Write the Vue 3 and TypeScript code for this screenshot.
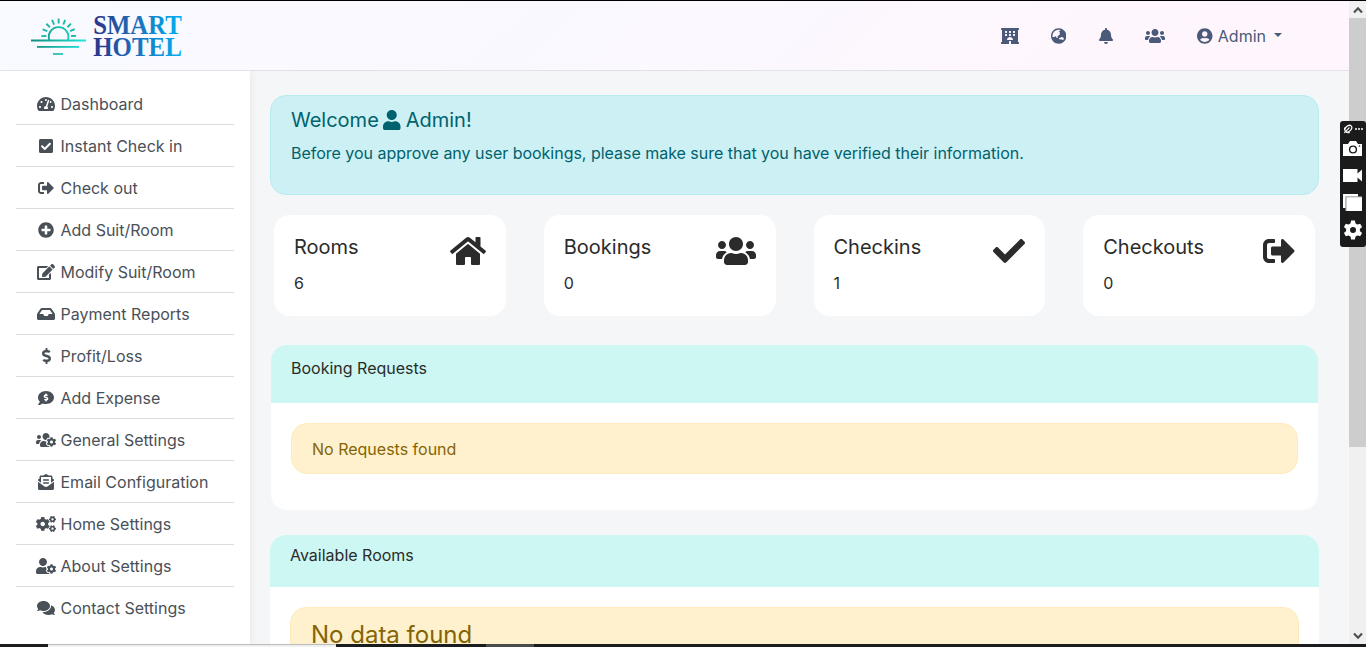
<script setup lang="ts">
interface Icon {
  w: number
  d: string
}

const cogBody =
  'c2.6-14.1 2.6-28.5 0-42.6l25.8-14.9c3-1.7 4.3-5.2 3.3-8.5-6.7-21.6-18.2-41.2-33.2-57.4-2.3-2.5-6-3.1-9-1.4l-25.8 14.9c-10.9-9.3-23.4-16.5-36.9-21.3v-29.8c0-3.4-2.4-6.4-5.7-7.1-22.3-5-45-4.8-66.2 0-3.3.7-5.7 3.7-5.7 7.1v29.8c-13.5 4.8-26 12-36.9 21.3l-25.8-14.9c-2.9-1.7-6.7-1.1-9 1.4-15 16.2-26.5 35.8-33.2 57.4-1 3.3.4 6.8 3.3 8.5l25.8 14.9c-2.6 14.1-2.6 28.5 0 42.6l-25.8 14.9c-3 1.7-4.3 5.2-3.3 8.5 6.7 21.6 18.2 41.1 33.2 57.4 2.3 2.5 6 3.1 9 1.4l25.8-14.9c10.9 9.3 23.4 16.5 36.9 21.3v29.8c0 3.4 2.4 6.4 5.7 7.1 22.3 5 45 4.8 66.2 0 3.3-.7 5.7-3.7 5.7-7.1v-29.8c13.5-4.8 26-12 36.9-21.3l25.8 14.9c2.9 1.7 6.7 1.1 9-1.4 15-16.2 26.5-35.8 33.2-57.4 1-3.3-.4-6.8-3.3-8.5l-25.8-14.9z'
const cogHole =
  'c-26.8 0-48.5-21.8-48.5-48.5s21.8-48.5 48.5-48.5 48.5 21.8 48.5 48.5-21.7 48.5-48.5 48.5z'

const smallCog = (y: number): string =>
  `M512.1 ${191 + y}l-8.2 14.3c-3 5.3-9.4 7.5-15.1 5.4-11.8-4.4-22.6-10.7-32.1-18.6-4.6-3.8-5.8-10.5-2.8-15.7l8.2-14.3c-6.9-8-12.3-17.3-15.9-27.4h-16.5c-6 0-11.2-4.3-12.2-10.3-2-12-2.1-24.6 0-37.1 1-6 6.2-10.4 12.2-10.4h16.5c3.6-10.1 9-19.4 15.9-27.4l-8.2-14.3c-3-5.2-1.9-11.9 2.8-15.7 9.5-7.9 20.4-14.2 32.1-18.6 5.7-2.1 12.1.1 15.1 5.4l8.2 14.3c10.5-1.9 21.2-1.9 31.7 0L552 ${6.3 + y}c3-5.3 9.4-7.5 15.1-5.4 11.8 4.4 22.6 10.7 32.1 18.6 4.6 3.8 5.8 10.5 2.8 15.7l-8.2 14.3c6.9 8 12.3 17.3 15.9 27.4h16.5c6 0 11.2 4.3 12.2 10.3 2 12 2.1 24.6 0 37.1-1 6-6.2 10.4-12.2 10.4h-16.5c-3.6 10.1-9 19.4-15.9 27.4l8.2 14.3c3 5.2 1.9 11.9-2.8 15.7-9.5 7.9-20.4 14.2-32.1 18.6-5.7 2.1-12.1-.1-15.1-5.4l-8.2-14.3c-10.4 1.9-21.2 1.9-31.7 0zm-10.5-58.8c38.5 29.6 82.4-14.3 52.8-52.8-38.5-29.7-82.4 14.3-52.8 52.8z`

const icons: Record<string, Icon> = {
  gauge: { w: 576, d: 'M288 32C128.94 32 0 160.94 0 320c0 52.8 14.25 102.26 39.06 144.8 5.61 9.62 16.3 15.2 27.44 15.2h443c11.14 0 21.83-5.58 27.44-15.2C561.75 422.26 576 372.8 576 320c0-159.06-128.94-288-288-288zm0 64c14.71 0 26.58 10.13 30.32 23.65-1.11 2.26-2.64 4.23-3.45 6.67l-9.22 27.67c-5.13 3.49-10.97 6.01-17.64 6.01-17.67 0-32-14.33-32-32S270.33 96 288 96zM96 384c-17.67 0-32-14.33-32-32s14.33-32 32-32 32 14.33 32 32-14.33 32-32 32zm48-160c-17.67 0-32-14.33-32-32s14.33-32 32-32 32 14.33 32 32-14.33 32-32 32zm246.77-72.41l-61.33 184C343.13 347.33 352 364.54 352 384c0 11.72-3.38 22.55-8.88 32H232.88c-5.5-9.45-8.88-20.28-8.88-32 0-33.94 26.5-61.43 59.9-63.59l61.34-184.01c4.17-12.56 17.73-19.45 30.36-15.17 12.57 4.19 19.35 17.79 15.17 30.36zm14.66 57.2l15.52-46.55c3.47-1.29 7.13-2.23 11.05-2.23 17.67 0 32 14.33 32 32s-14.33 32-32 32c-11.38-.01-20.89-6.28-26.57-15.22zM480 384c-17.67 0-32-14.33-32-32s14.33-32 32-32 32 14.33 32 32-14.33 32-32 32z' },
  checkSquare: { w: 448, d: 'M400 480H48c-26.51 0-48-21.49-48-48V80c0-26.51 21.49-48 48-48h352c26.51 0 48 21.49 48 48v352c0 26.51-21.49 48-48 48zm-204.686-98.059l184-184c6.248-6.248 6.248-16.379 0-22.627l-22.627-22.627c-6.248-6.248-16.379-6.249-22.628 0L184 302.745l-70.059-70.059c-6.248-6.248-16.379-6.248-22.628 0l-22.627 22.627c-6.248 6.248-6.248 16.379 0 22.627l104 104c6.249 6.25 16.379 6.25 22.628.001z' },
  signOut: { w: 512, d: 'M497 273L329 441c-15 15-41 4.5-41-17v-96H152c-13.3 0-24-10.7-24-24v-96c0-13.3 10.7-24 24-24h136V88c0-21.4 25.9-32 41-17l168 168c9.3 9.4 9.3 24.6 0 34zM192 436v-40c0-6.6-5.4-12-12-12H96c-17.7 0-32-14.3-32-32V160c0-17.7 14.3-32 32-32h84c6.6 0 12-5.4 12-12V76c0-6.6-5.4-12-12-12H96c-53 0-96 43-96 96v192c0 53 43 96 96 96h84c6.6 0 12-5.4 12-12z' },
  plus: { w: 512, d: 'M256 8C119 8 8 119 8 256s111 248 248 248 248-111 248-248S393 8 256 8zm144 276c0 6.6-5.4 12-12 12h-92v92c0 6.6-5.4 12-12 12h-56c-6.6 0-12-5.4-12-12v-92h-92c-6.6 0-12-5.4-12-12v-56c0-6.6 5.4-12 12-12h92v-92c0-6.6 5.4-12 12-12h56c6.6 0 12 5.4 12 12v92h92c6.6 0 12 5.4 12 12v56z' },
  edit: { w: 576, d: 'M402.6 83.2l90.2 90.2c3.8 3.8 3.8 10 0 13.8L274.4 405.6l-92.8 10.3c-12.4 1.4-22.9-9.1-21.5-21.5l10.3-92.8L388.8 83.2c3.8-3.8 10-3.8 13.8 0zm162-22.9l-48.8-48.8c-15.2-15.2-39.9-15.2-55.2 0l-35.4 35.4c-3.8 3.8-3.8 10 0 13.8l90.2 90.2c3.8 3.8 10 3.8 13.8 0l35.4-35.4c15.2-15.3 15.2-40 0-55.2zM384 346.2V448H64V128h229.8c3.2 0 6.2-1.3 8.5-3.5l40-40c7.6-7.6 2.2-20.5-8.5-20.5H48C21.5 64 0 85.5 0 112v352c0 26.5 21.5 48 48 48h352c26.5 0 48-21.5 48-48V306.2c0-10.7-12.9-16-20.5-8.5l-40 40c-2.2 2.3-3.5 5.3-3.5 8.5z' },
  inbox: { w: 576, d: 'M567.938 243.908L462.25 85.374A48.003 48.003 0 0 0 422.311 64H153.689a48 48 0 0 0-39.938 21.374L8.062 243.908A47.994 47.994 0 0 0 0 270.533V400c0 26.51 21.49 48 48 48h480c26.51 0 48-21.49 48-48V270.533a47.994 47.994 0 0 0-8.062-26.625zM162.252 128h251.497l85.333 128H376l-32 64H232l-32-64H76.918l85.334-128z' },
  dollar: { w: 288, d: 'M209.2 233.4l-108-31.6C88.7 198.2 80 186.5 80 173.5c0-16.3 13.2-29.5 29.5-29.5h66.3c12.2 0 24.2 3.7 34.2 10.5 6.1 4.1 14.3 3.1 19.5-2l34.8-34c7.1-6.9 6.1-18.4-1.8-24.5C238 74.8 207.4 64.1 176 64V16c0-8.8-7.2-16-16-16h-32c-8.8 0-16 7.2-16 16v48h-2.5C45.8 64-5.4 118.7.5 183.6c4.2 46.1 39.4 83.6 83.8 96.6l102.5 30c12.5 3.7 21.2 15.3 21.2 28.3 0 16.3-13.2 29.5-29.5 29.5h-66.3C100 368 88 364.3 78 357.5c-6.1-4.1-14.3-3.1-19.5 2l-34.8 34c-7.1 6.9-6.1 18.4 1.8 24.5 24.5 19.2 55.1 29.9 86.5 30v48c0 8.8 7.2 16 16 16h32c8.8 0 16-7.2 16-16v-48.2c46.6-.9 90.3-28.6 105.7-72.7 21.5-61.6-14.6-124.8-72.5-141.7z' },
  commentDollar: { w: 512, d: 'M256 32C114.62 32 0 125.12 0 240c0 49.56 21.41 95.01 57.02 130.74C44.46 421.05 2.7 465.97 2.2 466.5A7.995 7.995 0 0 0 8 480c66.26 0 115.99-31.75 140.6-51.38C181.29 440.93 217.59 448 256 448c141.38 0 256-93.12 256-208S397.38 32 256 32zm24 302.44V352c0 8.84-7.16 16-16 16h-16c-8.84 0-16-7.16-16-16v-17.73c-11.42-1.35-22.28-5.19-31.78-11.46-6.22-4.11-6.82-13.11-1.55-18.38l17.52-17.52c3.74-3.74 9.31-4.24 14.11-2.03 3.18 1.46 6.66 2.22 10.26 2.22h32.78c4.66 0 8.44-3.78 8.44-8.42 0-3.75-2.52-7.08-6.12-8.11l-50.07-14.3c-22.25-6.35-40.01-24.71-42.91-47.67-4.05-32.07 19.03-59.43 49.32-63.05V128c0-8.84 7.16-16 16-16h16c8.84 0 16 7.16 16 16v17.73c11.42 1.35 22.28 5.19 31.78 11.46 6.22 4.11 6.82 13.11 1.55 18.38l-17.52 17.52c-3.74 3.74-9.31 4.24-14.11 2.03a24.516 24.516 0 0 0-10.26-2.22h-32.78c-4.66 0-8.44 3.78-8.44 8.42 0 3.75 2.52 7.08 6.12 8.11l50.07 14.3c22.25 6.36 40.01 24.71 42.91 47.67 4.05 32.06-19.03 59.42-49.32 63.04z' },
  usersCog: { w: 640, d: `M610.5 341.3${cogBody}M496 368.5${cogHole}M96 224c35.3 0 64-28.7 64-64s-28.7-64-64-64-64 28.7-64 64 28.7 64 64 64zm224 32c1.9 0 3.7-.5 5.6-.6 8.3-21.7 20.5-42.1 36.3-59.2 7.4-8 17.9-12.6 28.9-12.6 6.9 0 13.7 1.8 19.6 5.3l7.9 4.6c.8-.5 1.6-.9 2.4-1.4 7-14.6 11.2-30.8 11.2-48 0-61.9-50.1-112-112-112S208 82.1 208 144c0 61.9 50.1 112 112 112zm105.2 194.5c-2.3-1.2-4.6-2.6-6.8-3.9-8.2 4.8-15.3 9.8-27.5 9.8-10.9 0-21.4-4.6-28.9-12.6-18.3-19.8-32.3-43.9-40.2-69.6-10.7-34.5 24.9-49.7 25.8-50.3-.1-2.6-.1-5.2 0-7.8l-7.9-4.6c-3.8-2.2-7-5-9.8-8.1-3.3.2-6.5.6-9.8.6-24.6 0-47.6-6-68.5-16h-8.3C179.6 288 128 339.6 128 403.2V432c0 26.5 21.5 48 48 48h255.4c-3.7-6-6.2-12.8-6.2-20.3v-9.2zM173.1 274.6C161.5 263.1 145.6 256 128 256H64c-35.3 0-64 28.7-64 64v32c0 17.7 14.3 32 32 32h65.9c6.3-47.4 34.9-87.3 75.2-109.4z` },
  mailText: { w: 512, d: 'M176 216h160c8.84 0 16-7.16 16-16v-16c0-8.84-7.16-16-16-16H176c-8.84 0-16 7.16-16 16v16c0 8.84 7.16 16 16 16zm-16 80c0 8.84 7.16 16 16 16h160c8.84 0 16-7.16 16-16v-16c0-8.84-7.16-16-16-16H176c-8.84 0-16 7.16-16 16v16zm96 121.13c-16.42 0-32.84-5.06-46.86-15.19L0 250.86V464c0 26.51 21.49 48 48 48h416c26.51 0 48-21.49 48-48V250.86L302.86 401.94c-14.02 10.12-30.44 15.19-46.86 15.19zm237.61-254.18c-8.85-6.94-17.24-13.47-29.61-22.81V96c0-26.51-21.49-48-48-48h-77.55c-3.04-2.2-5.87-4.26-9.04-6.56C312.6 29.17 279.2-.35 256 0c-23.2-.35-56.59 29.17-73.41 41.44-3.17 2.3-6 4.36-9.04 6.56H96c-26.51 0-48 21.49-48 48v44.14c-12.37 9.33-20.76 15.87-29.61 22.81A47.995 47.995 0 0 0 0 200.72v10.65l96 69.35V96h320v184.72l96-69.35v-10.65c0-14.74-6.78-28.67-18.39-37.77z' },
  cogs: { w: 640, d: `${smallCog(0)}M386.3 286.1l33.7 16.8c10.1 5.8 14.5 18.1 10.5 29.1-8.9 24.2-26.4 46.4-42.6 65.8-7.4 8.9-20.2 11.1-30.3 5.3l-29.1-16.8c-16 13.7-34.6 24.6-54.9 31.7v33.6c0 11.6-8.3 21.6-19.7 23.6-24.6 4.2-50.4 4.4-75.9 0-11.5-2-20-11.9-20-23.6V418c-20.3-7.2-38.9-18-54.9-31.7L74 403c-10 5.8-22.9 3.6-30.3-5.3-16.2-19.4-33.3-41.6-42.2-65.7-4-10.9.4-23.2 10.5-29.1l33.3-16.8c-3.9-20.9-3.9-42.4 0-63.4L12 205.8c-10.1-5.8-14.6-18.1-10.5-29 8.9-24.2 26-46.4 42.2-65.8 7.4-8.9 20.2-11.1 30.3-5.3l29.1 16.8c16-13.7 34.6-24.6 54.9-31.7V57.1c0-11.5 8.2-21.5 19.6-23.5 24.6-4.2 50.5-4.4 76-.1 11.5 2 20 11.9 20 23.6v33.6c20.3 7.2 38.9 18 54.9 31.7l29.1-16.8c10-5.8 22.9-3.6 30.3 5.3 16.2 19.4 33.2 41.6 42.1 65.8 4 10.9.1 23.2-10 29.1l-33.7 16.8c3.9 21 3.9 42.5 0 63.5zm-117.6 21.1c59.2-77-28.7-164.9-105.7-105.7-59.2 77 28.7 164.9 105.7 105.7z${smallCog(299)}` },
  userCog: { w: 640, d: `M610.5 373.3${cogBody}M496 400.5${cogHole}M224 256c70.7 0 128-57.3 128-128S294.7 0 224 0 96 57.3 96 128s57.3 128 128 128zm201.2 226.5c-2.3-1.2-4.6-2.6-6.8-3.9l-7.9 4.6c-6 3.4-12.8 5.3-19.6 5.3-10.9 0-21.4-4.6-28.9-12.6-18.3-19.8-32.3-43.9-40.2-69.6-5.5-17.7 1.9-36.4 17.9-45.7l7.9-4.6c-.1-2.6-.1-5.2 0-7.8l-7.9-4.6c-16-9.2-23.4-28-17.9-45.7.9-2.9 2.2-5.8 3.2-8.7-3.8-.3-7.5-1.2-11.4-1.2h-16.7c-22.2 10.2-46.9 16-72.9 16s-50.6-5.8-72.9-16h-16.7C60.2 288 0 348.2 0 422.4V464c0 26.5 21.5 48 48 48h352c10.1 0 19.5-3.2 27.2-8.5-1.2-3.8-2-7.7-2-11.8v-9.2z` },
  comments: { w: 576, d: 'M416 192c0-88.4-93.1-160-208-160S0 103.6 0 192c0 34.3 14.1 65.9 38 92-13.4 30.2-35.5 54.2-35.8 54.5-2.2 2.3-2.8 5.7-1.5 8.7S4.8 352 8 352c36.6 0 66.9-12.3 88.7-25 32.2 15.7 70.3 25 111.3 25 114.9 0 208-71.6 208-160zm122 220c23.9-26 38-57.7 38-92 0-66.9-53.5-124.2-129.3-148.1.9 6.6 1.3 13.3 1.3 20.1 0 105.9-107.7 192-240 192-10.8 0-21.3-.8-31.7-1.9C207.8 439.6 281.8 480 368 480c41 0 79.1-9.2 111.3-25 21.8 12.7 52.1 25 88.7 25 3.2 0 6.1-1.9 7.3-4.8 1.3-2.9.7-6.3-1.5-8.7-.3-.3-22.4-24.2-35.8-54.5z' },
  hotel: { w: 576, d: 'M560 64c8.84 0 16-7.16 16-16V16c0-8.84-7.16-16-16-16H16C7.16 0 0 7.16 0 16v32c0 8.84 7.16 16 16 16h15.98v384H16c-8.84 0-16 7.16-16 16v32c0 8.84 7.16 16 16 16h240v-80c0-8.8 7.2-16 16-16h32c8.8 0 16 7.2 16 16v80h240c8.84 0 16-7.16 16-16v-32c0-8.84-7.16-16-16-16h-16V64h16zm-304 44.8c0-6.4 6.4-12.8 12.8-12.8h38.4c6.4 0 12.8 6.4 12.8 12.8v38.4c0 6.4-6.4 12.8-12.8 12.8h-38.4c-6.4 0-12.8-6.4-12.8-12.8v-38.4zm0 96c0-6.4 6.4-12.8 12.8-12.8h38.4c6.4 0 12.8 6.4 12.8 12.8v38.4c0 6.4-6.4 12.8-12.8 12.8h-38.4c-6.4 0-12.8-6.4-12.8-12.8v-38.4zm-128-96c0-6.4 6.4-12.8 12.8-12.8h38.4c6.4 0 12.8 6.4 12.8 12.8v38.4c0 6.4-6.4 12.8-12.8 12.8h-38.4c-6.4 0-12.8-6.4-12.8-12.8v-38.4zM179.2 256h-38.4c-6.4 0-12.8-6.4-12.8-12.8v-38.4c0-6.4 6.4-12.8 12.8-12.8h38.4c6.4 0 12.8 6.4 12.8 12.8v38.4c0 6.4-6.4 12.8-12.8 12.8zM192 384c0-53.02 42.98-96 96-96s96 42.98 96 96H192zm256-140.8c0 6.4-6.4 12.8-12.8 12.8h-38.4c-6.4 0-12.8-6.4-12.8-12.8v-38.4c0-6.4 6.4-12.8 12.8-12.8h38.4c6.4 0 12.8 6.4 12.8 12.8v38.4zm0-96c0 6.4-6.4 12.8-12.8 12.8h-38.4c-6.4 0-12.8-6.4-12.8-12.8v-38.4c0-6.4 6.4-12.8 12.8-12.8h38.4c6.4 0 12.8 6.4 12.8 12.8v38.4z' },
  globe: { w: 496, d: 'M248 8C111.03 8 0 119.03 0 256s111.03 248 248 248 248-111.03 248-248S384.97 8 248 8zm-11.34 240.23c-2.89 4.82-8.1 7.77-13.72 7.77h-.31c-4.24 0-8.31 1.69-11.31 4.69l-5.66 5.66c-3.12 3.12-3.12 8.19 0 11.31l5.66 5.66c3 3 4.69 7.07 4.69 11.31V304c0 8.84-7.16 16-16 16h-6.11c-6.06 0-11.6-3.42-14.31-8.85l-22.62-45.23c-2.44-4.88-8.95-5.94-12.81-2.08l-19.47 19.46c-3 3-7.07 4.69-11.31 4.69H50.81C49.12 277.55 48 266.92 48 256c0-110.28 89.72-200 200-200 21.51 0 42.2 3.51 61.63 9.82l-50.16 38.53c-5.11 3.41-4.63 11.06.86 13.81l10.83 5.41c5.42 2.71 8.84 8.25 8.84 14.31V216c0 4.42-3.58 8-8 8h-3.06c-3.03 0-5.8-1.71-7.15-4.42-1.56-3.12-5.96-3.29-7.76-.3l-17.37 28.95zM408 358.43c0 4.24-1.69 8.31-4.69 11.31l-9.57 9.57c-3 3-7.07 4.69-11.31 4.69h-15.16c-4.24 0-8.31-1.69-11.31-4.69l-13.01-13.01a26.767 26.767 0 0 0-25.42-7.04l-21.27 5.32c-1.27.32-2.57.48-3.88.48h-10.34c-4.24 0-8.31-1.69-11.31-4.69l-11.91-11.91a8.008 8.008 0 0 1-2.34-5.66v-10.2c0-3.27 1.99-6.21 5.03-7.43l39.34-15.74c1.98-.79 3.86-1.82 5.59-3.05l23.71-16.89a7.978 7.978 0 0 1 4.64-1.48h12.09c3.23 0 6.15 1.94 7.39 4.93l5.35 12.85a4 4 0 0 0 3.69 2.46h3.8c1.78 0 3.35-1.18 3.84-2.88l4.2-14.47c.5-1.71 2.06-2.88 3.84-2.88h6.06c2.21 0 4 1.79 4 4v12.93c0 2.12.84 4.16 2.34 5.66l11.91 11.91c3 3 4.69 7.07 4.69 11.31v24.6z' },
  bell: { w: 448, d: 'M224 512c35.32 0 63.97-28.65 63.97-64H160.03c0 35.35 28.65 64 63.97 64zm215.39-149.71c-19.32-20.76-55.47-51.99-55.47-154.29 0-77.7-54.48-139.9-127.94-155.16V32c0-17.67-14.32-32-31.98-32s-31.98 14.33-31.98 32v20.84C118.56 68.1 64.08 130.3 64.08 208c0 102.3-36.15 133.53-55.47 154.29-6 6.45-8.66 14.16-8.61 21.71.11 16.4 12.98 32 32.1 32h383.8c19.12 0 32-15.6 32.1-32 .05-7.55-2.61-15.27-8.61-21.71z' },
  users: { w: 640, d: 'M96 224c35.3 0 64-28.7 64-64s-28.7-64-64-64-64 28.7-64 64 28.7 64 64 64zm448 0c35.3 0 64-28.7 64-64s-28.7-64-64-64-64 28.7-64 64 28.7 64 64 64zm32 32h-64c-17.6 0-33.5 7.1-45.1 18.6 40.3 22.1 68.9 62 75.1 109.4h66c17.7 0 32-14.3 32-32v-32c0-35.3-28.7-64-64-64zm-256 0c61.9 0 112-50.1 112-112S381.9 32 320 32 208 82.1 208 144s50.1 112 112 112zm76.8 32h-8.3c-20.8 10-43.9 16-68.5 16s-47.6-6-68.5-16h-8.3C179.6 288 128 339.6 128 403.2V432c0 26.5 21.5 48 48 48h288c26.5 0 48-21.5 48-48v-28.8c0-63.6-51.6-115.2-115.2-115.2zm-223.7-13.4C161.5 263.1 145.6 256 128 256H64c-35.3 0-64 28.7-64 64v32c0 17.7 14.3 32 32 32h65.9c6.3-47.4 34.9-87.3 75.2-109.4z' },
  userCircle: { w: 496, d: 'M248 8C111 8 0 119 0 256s111 248 248 248 248-111 248-248S385 8 248 8zm0 96c48.6 0 88 39.4 88 88s-39.4 88-88 88-88-39.4-88-88 39.4-88 88-88zm0 344c-58.7 0-111.3-26.6-146.5-68.2 18.8-35.4 55.6-59.8 98.5-59.8 2.4 0 4.8.4 7.1 1.1 13 4.2 26.6 6.9 40.9 6.9 14.3 0 28-2.7 40.9-6.9 2.3-.7 4.7-1.1 7.1-1.1 42.9 0 79.7 24.4 98.5 59.8C359.3 421.4 306.7 448 248 448z' },
  user: { w: 448, d: 'M224 256c70.7 0 128-57.3 128-128S294.7 0 224 0 96 57.3 96 128s57.3 128 128 128zm89.6 32h-16.7c-22.2 10.2-46.9 16-72.9 16s-50.6-5.8-72.9-16h-16.7C60.2 288 0 348.2 0 422.4V464c0 26.5 21.5 48 48 48h352c26.5 0 48-21.5 48-48v-41.6c0-74.2-60.2-134.4-134.4-134.4z' },
  home: { w: 576, d: 'M280.37 148.26L96 300.11V464a16 16 0 0 0 16 16l112.06-.29a16 16 0 0 0 15.92-16V368a16 16 0 0 1 16-16h64a16 16 0 0 1 16 16v95.64a16 16 0 0 0 16 16.05L464 480a16 16 0 0 0 16-16V300L295.67 148.26a12.19 12.19 0 0 0-15.3 0zM571.6 251.47L488 182.56V44.05a12 12 0 0 0-12-12h-56a12 12 0 0 0-12 12v72.61L318.47 43a48 48 0 0 0-61 0L4.34 251.47a12 12 0 0 0-1.6 16.9l25.5 31A12 12 0 0 0 45.15 301l235.22-193.74a12.19 12.19 0 0 1 15.3 0L530.9 301a12 12 0 0 0 16.9-1.6l25.5-31a12 12 0 0 0-1.7-16.93z' },
  check: { w: 512, d: 'M173.898 439.404l-166.4-166.4c-9.997-9.997-9.997-26.206 0-36.204l36.203-36.204c9.997-9.998 26.207-9.998 36.204 0L192 312.69 432.095 72.596c9.997-9.997 26.207-9.997 36.204 0l36.203 36.204c9.997 9.997 9.997 26.206 0 36.204l-294.4 294.401c-9.998 9.997-26.207 9.997-36.204-.001z' },
}

const menu: { icon: string; label: string }[] = [
  { icon: 'gauge', label: 'Dashboard' },
  { icon: 'checkSquare', label: 'Instant Check in' },
  { icon: 'signOut', label: 'Check out' },
  { icon: 'plus', label: 'Add Suit/Room' },
  { icon: 'edit', label: 'Modify Suit/Room' },
  { icon: 'inbox', label: 'Payment Reports' },
  { icon: 'dollar', label: 'Profit/Loss' },
  { icon: 'commentDollar', label: 'Add Expense' },
  { icon: 'usersCog', label: 'General Settings' },
  { icon: 'mailText', label: 'Email Configuration' },
  { icon: 'cogs', label: 'Home Settings' },
  { icon: 'userCog', label: 'About Settings' },
  { icon: 'comments', label: 'Contact Settings' },
]

const navIcons = ['hotel', 'globe', 'bell', 'users']

const stats: { title: string; value: number; icon: string }[] = [
  { title: 'Rooms', value: 6, icon: 'home' },
  { title: 'Bookings', value: 0, icon: 'users' },
  { title: 'Checkins', value: 1, icon: 'check' },
  { title: 'Checkouts', value: 0, icon: 'signOut' },
]

const rays = [-90, -67, -45, -22, 0, 22, 45, 67, 90]
const box = (name: string): string => `0 0 ${icons[name].w} 512`
</script>

<template>
  <div class="screen">
    <div class="page">
      <header class="topbar">
        <svg class="logo" width="160" height="60" viewBox="0 -5 160 60">
          <defs>
            <linearGradient id="sun" gradientUnits="userSpaceOnUse" x1="3" y1="0" x2="58" y2="0">
              <stop offset="0" stop-color="#128a7c" />
              <stop offset="1" stop-color="#1fe6dc" />
            </linearGradient>
            <linearGradient id="brand" gradientUnits="userSpaceOnUse" x1="66" y1="0" x2="154" y2="0">
              <stop offset="0" stop-color="#2a3487" />
              <stop offset="0.5" stop-color="#1b73bd" />
              <stop offset="1" stop-color="#00b1f2" />
            </linearGradient>
          </defs>
          <g stroke="url(#sun)" fill="none">
            <path d="M21.3 29a9.8 9.8 0 1 1 18.6 0" stroke-width="1.9" />
            <path
              v-for="r in rays"
              :key="r"
              d="M30.7 12.6L30.6 7.6"
              :transform="`rotate(${r} 30.7 25)`"
              stroke-width="1.9"
            />
          </g>
          <g fill="url(#sun)">
            <rect x="3" y="28.5" width="55" height="2" />
            <rect x="9" y="35" width="42" height="1.8" />
            <rect x="25" y="42.2" width="10" height="1.6" />
          </g>
          <g class="brand" fill="url(#brand)">
            <text x="65.2" y="22.7" textLength="88.6" lengthAdjust="spacingAndGlyphs">SMART</text>
            <text x="65.2" y="45.1" textLength="88.6" lengthAdjust="spacingAndGlyphs">HOTEL</text>
          </g>
        </svg>
        <nav class="nav">
          <svg
            v-for="n in navIcons"
            :key="n"
            :viewBox="box(n)"
            :width="icons[n].w / 32"
            height="16"
            fill="currentColor"
          >
            <path :d="icons[n].d" />
          </svg>
          <span class="account">
            <svg :viewBox="box('userCircle')" width="15.5" height="16" fill="currentColor">
              <path :d="icons.userCircle.d" />
            </svg>
            <span class="account-name">Admin</span>
            <i class="caret"></i>
          </span>
        </nav>
      </header>

      <div class="body">
        <aside class="sidebar">
          <ul class="menu">
            <li v-for="m in menu" :key="m.label">
              <span class="slot">
                <svg :viewBox="box(m.icon)" :width="icons[m.icon].w / 32" height="16" fill="currentColor">
                  <path :d="icons[m.icon].d" />
                </svg>
              </span>
              <span>{{ m.label }}</span>
            </li>
          </ul>
        </aside>

        <main class="main">
          <section class="welcome">
            <h1>
              <span>Welcome</span>
              <svg :viewBox="box('user')" width="17.5" height="20" fill="currentColor">
                <path :d="icons.user.d" />
              </svg>
              <span>Admin!</span>
            </h1>
            <p>Before you approve any user bookings, please make sure that you have verified their information.</p>
          </section>

          <section class="stats">
            <article v-for="s in stats" :key="s.title" class="stat">
              <div>
                <h2>{{ s.title }}</h2>
                <p>{{ s.value }}</p>
              </div>
              <svg :viewBox="box(s.icon)" :width="icons[s.icon].w / 16" height="32" fill="currentColor">
                <path :d="icons[s.icon].d" />
              </svg>
            </article>
          </section>

          <section class="panel requests">
            <header>Booking Requests</header>
            <div class="notice">No Requests found</div>
          </section>

          <section class="panel rooms">
            <header>Available Rooms</header>
            <div class="notice large">No data found</div>
          </section>
        </main>
      </div>
    </div>

    <div class="scrollbar">
      <div class="arrow">
        <svg width="10" height="8" viewBox="0 0 10 8"><path d="M1 6.5L5 2.3L9 6.5" /></svg>
      </div>
      <div class="thumb"></div>
      <div class="arrow down">
        <svg width="10" height="8" viewBox="0 0 10 8"><path d="M1 1.5L5 5.7L9 1.5" /></svg>
      </div>
    </div>

    <div class="recorder">
      <svg width="26" height="126" viewBox="0 0 26 126" fill="#fff">
        <g fill="none" stroke="#fff">
          <ellipse cx="8.3" cy="7.7" rx="4" ry="2.7" transform="rotate(-45 8.3 7.7)" stroke-width="1.2" />
          <path d="M4.3 11.8L9.5 6.5M4.6 6.6v2.4M7.4 11.8h2.4" stroke-width="1.1" />
        </g>
        <path d="M15 7.2h2v1.6h-2zM18 7.2h2v1.6h-2zM21 7.2h2v1.6h-2z" />
        <path d="M3 23h5l2-3h6l2 3h4v12H3z" />
        <circle cx="13" cy="28.5" r="3.4" fill="none" stroke="#1b1b1b" stroke-width="1.4" />
        <circle cx="19.5" cy="25" r=".8" fill="#1b1b1b" />
        <path d="M3 48h14.5v4.5L22 48.5v12l-4.5-4V61H3z" />
        <path d="M3 73h15v14H3z" />
        <path d="M5.3 75.3H22V90H5.3z" fill="#999" />
        <path d="M6.5 76.3H22V90H6.5z" />
        <g transform="translate(13 109)">
          <circle r="5" fill="none" stroke="#fff" stroke-width="4" />
          <path
            v-for="a in [0, 60, 120, 180, 240, 300]"
            :key="a"
            d="M-2.6-6L-1.9-9.4H1.9L2.6-6z"
            :transform="`rotate(${a})`"
          />
        </g>
      </svg>
    </div>

    <div class="taskbar">
      <i class="search"></i>
      <i class="active"></i>
    </div>
  </div>
</template>

<style>
body {
  margin: 0;
  overflow: hidden;
}
</style>

<style scoped>
* {
  box-sizing: border-box;
}
.screen {
  position: relative;
  width: 1366px;
  height: 647px;
  border-top: 1px solid #000;
  overflow: hidden;
  display: flex;
  background: #f4f6f8;
  color: #2b2b2b;
  font-family: Inter, 'Liberation Sans', sans-serif;
  font-size: 16px;
  line-height: 24px;
}
svg {
  display: block;
  flex: none;
}
h1,
h2,
p,
ul {
  margin: 0;
  padding: 0;
  font-weight: 400;
}
.page {
  width: 1349px;
  height: 646px;
  display: flex;
  flex-direction: column;
}
.topbar {
  flex: none;
  height: 70px;
  padding: 0 67px 0 28px;
  display: flex;
  align-items: center;
  justify-content: space-between;
  border-bottom: 1px solid #e3e1e8;
  background: linear-gradient(135deg, #f8faff 0%, #fbf8ff 50%, #fff6fd 85%);
}
.brand {
  font: bold 26.5px 'Liberation Serif', serif;
}
.nav {
  display: flex;
  align-items: center;
  gap: 32.3px;
  color: #4a5a78;
}
.account {
  display: flex;
  align-items: center;
}
.account-name {
  margin-left: 5px;
}
.caret {
  margin: 0 0 1px 8px;
  border: 4px solid transparent;
  border-top-color: currentColor;
  border-bottom: 0;
}
.body {
  flex: 1;
  display: flex;
  min-height: 0;
}
.sidebar {
  flex: none;
  width: 250px;
  padding: 12px 16px;
  background: #fff;
  box-shadow: 0 0 10px rgba(0, 0, 0, 0.07);
  clip-path: inset(0 -15px 0 0);
}
.menu {
  list-style: none;
}
.menu li {
  height: 42px;
  padding-left: 20px;
  display: flex;
  align-items: center;
  gap: 4.5px;
  border-bottom: 1px solid #dcdcdc;
  color: #4a5057;
}
.menu li:last-child {
  border-bottom-color: transparent;
}
.slot {
  width: 20px;
  display: flex;
  justify-content: center;
}
.main {
  flex: 1;
  padding: 24px 30px 0 20px;
}
.welcome {
  height: 100px;
  padding: 12px 20px;
  border: 1px solid #b7ebef;
  border-radius: 16px;
  background: #ccf0f4;
  color: #00626d;
}
.welcome h1 {
  display: flex;
  align-items: center;
  gap: 4.7px;
  font-size: 20px;
  line-height: 24px;
  margin-bottom: 9px;
}
.welcome p {
  letter-spacing: -0.02px;
}
.stats {
  margin: 20px 4px 0;
  display: grid;
  grid-template-columns: repeat(4, 1fr);
  gap: 38px;
}
.stat {
  height: 101px;
  padding: 20px;
  display: flex;
  justify-content: space-between;
  background: #fff;
  border-radius: 16px;
}
.stat h2 {
  font-size: 20px;
  line-height: 24px;
  margin-bottom: 12px;
}
.panel {
  overflow: hidden;
  border-radius: 16px;
  background: #fff;
}
.panel header {
  background: #ccf7f2;
  padding: 11px 20px;
}
.requests {
  height: 165px;
  margin: 29px 1px 0;
}
.requests header {
  height: 58px;
}
.rooms {
  height: 180px;
  margin-top: 25px;
}
.rooms header {
  height: 52px;
  padding-top: 8px;
}
.notice {
  margin: 20px 20px 0;
  height: 51px;
  padding: 13px 20px;
  border: 1px solid #feeabb;
  border-radius: 16px;
  background: #fff1cd;
  color: #856404;
}
.notice.large {
  height: 80px;
  padding-top: 15px;
  font-size: 24px;
}
.scrollbar {
  width: 17px;
  height: 643px;
  background: #f0f0f0;
  display: flex;
  flex-direction: column;
}
.arrow {
  height: 17px;
  display: flex;
  align-items: center;
  justify-content: center;
}
.arrow path {
  fill: none;
  stroke: #505050;
  stroke-width: 2.2;
}
.arrow.down {
  margin-top: auto;
}
.thumb {
  height: 429px;
  background: #cdcdcd;
}
.recorder {
  position: absolute;
  left: 1340px;
  top: 120px;
  width: 26px;
  height: 126px;
  border-radius: 3px;
  background: #1b1b1b;
}
.taskbar {
  position: absolute;
  left: 0;
  top: 643px;
  width: 1366px;
  height: 3px;
  background: #1a1c1d;
  display: flex;
}
.search {
  margin-left: 48px;
  width: 288px;
  background: #f0f0f0;
  border-top: 1px solid #bbb;
}
.active {
  margin-left: 150px;
  width: 48px;
  background: #4a4b4d;
}
</style>
